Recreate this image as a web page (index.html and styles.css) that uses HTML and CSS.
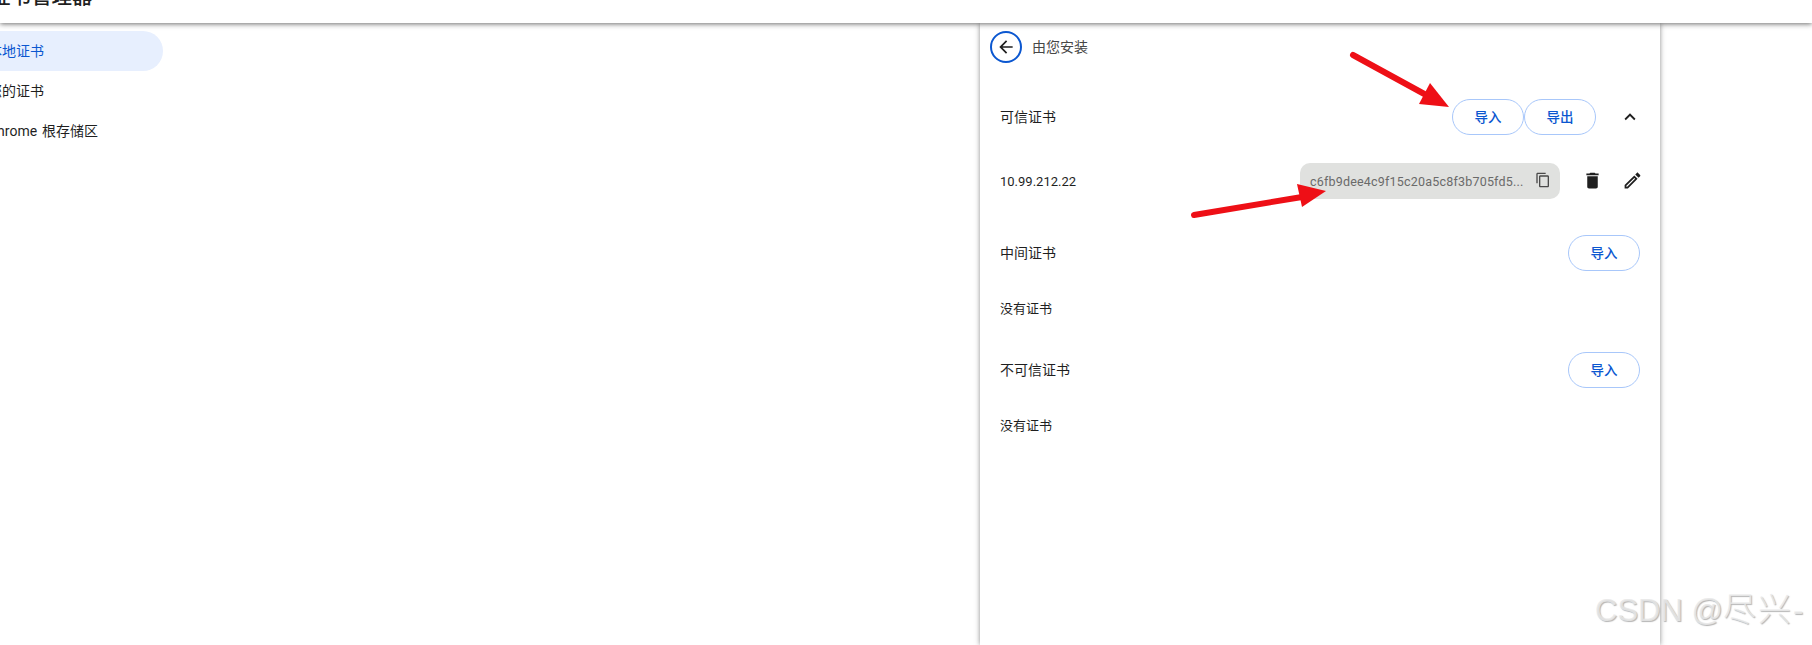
FILE: index.html
```html
<!DOCTYPE html>
<html lang="zh-CN">
<head>
<meta charset="utf-8">
<title>证书管理器</title>
<link rel="stylesheet" href="styles.css">
</head>
<body>
<div class="page">
  <header class="topbar"><h1 class="title">证书管理器</h1></header>
  <main class="main">
    <nav class="sidebar">
      <a class="nav-item active">本地证书</a>
      <a class="nav-item">您的证书</a>
      <a class="nav-item">Chrome 根存储区</a>
    </nav>
    <section class="panel">
      <div class="back-row">
        <button class="back-btn" aria-label="返回">
          <svg class="icon-back" viewBox="0 0 24 24"><path d="M20 11H7.83l5.59-5.59L12 4l-8 8 8 8 1.41-1.41L7.83 13H20v-2z"/></svg>
        </button>
        <span class="back-label">由您安装</span>
      </div>
      <div class="group group-first">
        <div class="row">
          <span class="row-label">可信证书</span>
          <div class="actions">
            <button class="pill">导入</button>
            <button class="pill">导出</button>
            <svg class="icon-chevron" viewBox="0 0 24 24"><path d="M12 8l-6 6 1.41 1.41L12 10.83l4.59 4.58L18 14z"/></svg>
          </div>
        </div>
        <div class="row cert-row">
          <span class="cert-name">10.99.212.22</span>
          <div class="actions">
            <div class="hash-chip">
              <span class="hash">c6fb9dee4c9f15c20a5c8f3b705fd5...</span>
              <svg class="icon-copy" viewBox="0 0 24 24"><path d="M16 1H4c-1.1 0-2 .9-2 2v14h2V3h12V1zm3 4H8c-1.1 0-2 .9-2 2v14c0 1.1.9 2 2 2h11c1.1 0 2-.9 2-2V7c0-1.1-.9-2-2-2zm0 16H8V7h11v14z"/></svg>
            </div>
            <svg class="icon-trash" viewBox="0 0 24 24"><path d="M6 19c0 1.1.9 2 2 2h8c1.100 0 2-.9 2-2V7H6v12zM19 4h-3.500l-1-1h-5l-1 1H5v2h14V4z"/></svg>
            <svg class="icon-edit" viewBox="0 0 24 24"><path d="M3 17.250V21h3.750L17.810 9.940l-3.750-3.750L3 17.250zM5.920 19H5v-.92l9.060-9.060.92.920L5.920 19zM20.710 7.040c.39-.39.39-1.020 0-1.410l-2.340-2.340c-.39-.39-1.020-.39-1.410 0l-1.830 1.830 3.750 3.750 1.830-1.830z"/></svg>
          </div>
        </div>
      </div>
      <div class="group group-second">
        <div class="row">
          <span class="row-label">中间证书</span>
          <button class="pill">导入</button>
        </div>
        <p class="empty">没有证书</p>
      </div>
      <div class="group group-third">
        <div class="row">
          <span class="row-label">不可信证书</span>
          <button class="pill">导入</button>
        </div>
        <p class="empty">没有证书</p>
      </div>
    </section>
  </main>
  <svg class="arrows" viewBox="0 0 1812 645" aria-hidden="true">
    <line class="shaft" x1="1353" y1="55" x2="1428" y2="96"/>
    <polygon class="head" points="1449,107 1430,83 1419,104"/>
    <line class="shaft" x1="1194" y1="215" x2="1302" y2="197"/>
    <polygon class="head" points="1326,191 1297,184 1302,207"/>
  </svg>
  <div class="watermark">CSDN @<span class="watermark-name">尽兴</span>-</div>
</div>
</body>
</html>
```
FILE: styles.css
```css
* { box-sizing: border-box; }
html, body { margin: 0; height: 100%; background: #fff; }
body { font-family: Roboto, "Noto Sans CJK SC", sans-serif; color: #1f1f1f; overflow: hidden; }
.page { position: relative; width: 1812px; height: 645px; overflow: hidden; display: flex; flex-direction: column; }
.topbar { position: relative; z-index: 2; flex: none; height: 23px; background: #fff; box-shadow: 0 1px 5px rgba(60,60,60,.75); overflow: hidden; }
.title { margin: -18px 0 0 -10px; font-size: 20.500px; line-height: 30px; font-weight: 500; white-space: nowrap; }
.main { flex: 1; display: flex; min-height: 0; }
.sidebar { flex: none; width: 196px; margin: 8px 0 0 -33px; display: flex; flex-direction: column; }
.nav-item { height: 40px; padding: 0 0 2px 21px; display: flex; align-items: center; font-size: 14px; word-spacing: 1.500px; color: #1f1f1f; border-radius: 0 20px 20px 0; white-space: nowrap; }
.nav-item.active { background: #e7effe; color: #0b57d0; }
.panel { flex: none; width: 680px; margin-left: 817px; padding: 8px 20px 0; background: #fff; box-shadow: 0 0 5px rgba(60,60,60,.6); }
.back-row { display: flex; align-items: center; gap: 10px; margin-left: -10px; }
.back-btn { width: 32px; height: 32px; padding: 0; border: 2px solid #0b57d0; border-radius: 50%; background: #fff; display: flex; align-items: center; justify-content: center; }
.icon-back { width: 20px; height: 20px; fill: #1f1f1f; }
.back-label { font-size: 14px; color: #474747; padding-bottom: 2px; }
.group-first { margin-top: 36px; }
.group-second { margin-top: 36px; }
.group-third { margin-top: 33px; }
.row { display: flex; align-items: center; justify-content: space-between; height: 36px; }
.cert-row { margin-top: 28px; }
.row-label { font-size: 14px; color: #1f1f1f; padding-bottom: 3px; }
.cert-name { font-size: 13px; color: #1f1f1f; }
.actions { display: flex; align-items: center; }
.pill { width: 72px; height: 36px; padding: 0 0 2px; border: 1px solid #a8c7fa; border-radius: 18px; background: #fff; color: #0b57d0; font: 500 13.500px Roboto, "Noto Sans CJK SC", sans-serif; }
.icon-chevron { width: 22px; height: 22px; fill: #1f1f1f; margin: 0 -1px 0 23px; }
.hash-chip { width: 260px; height: 36px; padding: 0 8px 0 10px; background: #e0e1df; border-radius: 10px; display: flex; align-items: center; justify-content: space-between; }
.hash { font-size: 12.500px; letter-spacing: .2px; color: #6a6a6a; white-space: nowrap; }
.icon-copy { width: 16px; height: 16px; fill: #4a4a4a; margin: 0 1.500px 2px 0; }
.icon-trash { width: 21px; height: 21px; fill: #1f1f1f; margin: 0 0 2px 22px; }
.icon-edit { width: 21px; height: 21px; fill: #1f1f1f; margin: 0 -3px 2px 19px; }
.empty { margin: 28px 0 0; font-size: 13px; line-height: 20px; color: #1f1f1f; }
.arrows { position: absolute; inset: 0; width: 1812px; height: 645px; z-index: 3; pointer-events: none; }
.shaft { stroke: #ee0f16; stroke-width: 6; stroke-linecap: round; }
.head { fill: #ee0f16; }
.watermark { position: absolute; z-index: 4; left: 1595px; top: 590px; font-family: "Liberation Sans", "Noto Sans CJK SC", sans-serif; font-size: 31px; line-height: 40px; color: rgba(232,232,232,.85); text-shadow: 1px 1px 1px rgba(150,150,150,.7); white-space: nowrap; }
.watermark-name { font-size: 33px; letter-spacing: 2px; font-weight: 300; }
```
